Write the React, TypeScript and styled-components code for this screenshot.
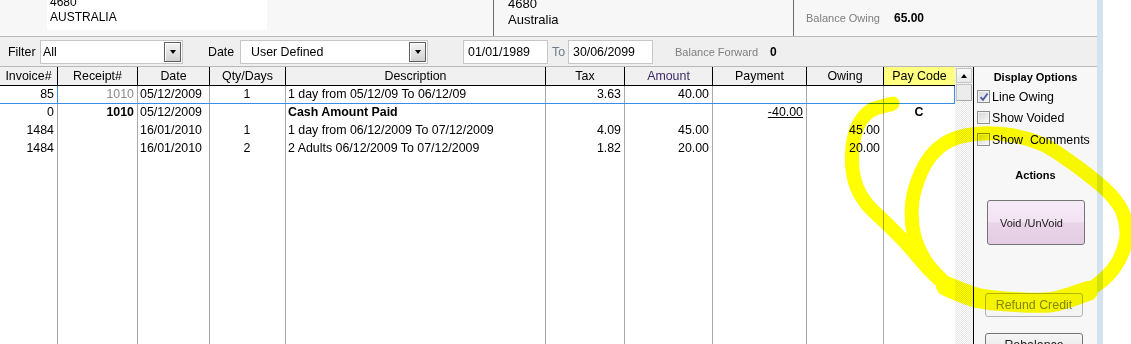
import React from "react";
import styled, { createGlobalStyle } from "styled-components";

const GlobalStyle = createGlobalStyle`
  html, body { margin: 0; padding: 0; background: #fff; }
  body { font-family: "Liberation Sans", Arial, sans-serif; font-size: 12px; color: #000; }
  * { box-sizing: border-box; }
`;

const Screen = styled.div`
  position: relative;
  width: 1131px;
  height: 344px;
  display: flex;
  overflow: hidden;
  background: #fff;
`;

const Main = styled.div`
  width: 1097px;
  display: flex;
  flex-direction: column;
  background: #f7f7f7;
`;

const EdgeStrip = styled.div`
  width: 6px;
  background: #d5e2ef;
`;

/* ---------- top address section ---------- */
const TopSection = styled.div`
  height: 37px;
  display: grid;
  grid-template-columns: 47px 220px 226px 300px 1fr;
  border-bottom: 1px solid #b8b8b8;
`;

const AddressBox = styled.div`
  grid-column: 2;
  height: 30px;
  background: #fff;
  overflow: hidden;
  padding-left: 3px;
`;

const AddressLines = styled.div<{ $size: number; $lh: number; $shift: number }>`
  margin-top: ${(p) => p.$shift}px;
  font-size: ${(p) => p.$size}px;
  line-height: ${(p) => p.$lh}px;
`;

const RightAddress = styled.div`
  grid-column: 4;
  height: 36px;
  border-left: 1px solid #6b6b6b;
  padding-left: 14px;
  overflow: hidden;
`;

const BalanceBlock = styled.div`
  height: 36px;
  border-left: 1px solid #6b6b6b;
  padding-left: 12px;
  display: flex;
  align-items: center;
  gap: 14px;
`;

const MutedLabel = styled.span`
  font-size: 11px;
  color: #7d7d7d;
`;

const BoldValue = styled.span`
  font-weight: bold;
  font-size: 12px;
`;

/* ---------- filter bar ---------- */
const FilterBar = styled.div`
  height: 30px;
  border-bottom: 1px solid #b8b8b8;
  background: #efefef;
  display: flex;
  align-items: center;
  padding-left: 8px;
  font-size: 12.4px;
`;

const BarLabel = styled.span<{ $w: number; $ml?: number; $muted?: boolean }>`
  width: ${(p) => p.$w}px;
  margin-left: ${(p) => p.$ml ?? 0}px;
  color: ${(p) => (p.$muted ? "#6d7b8a" : "#000")};
  flex-shrink: 0;
`;

const SelectBox = styled.div<{ $w: number; $pl: number }>`
  width: ${(p) => p.$w}px;
  height: 24px;
  border: 1px solid #c6c6c6;
  background: #fff;
  display: flex;
  align-items: center;
  padding-left: ${(p) => p.$pl}px;
  flex-shrink: 0;
`;

const DropButton = styled.div`
  margin-left: auto;
  margin-right: 1px;
  width: 17px;
  height: 20px;
  border: 1px solid #5e5e5e;
  background: linear-gradient(#f4f4f4, #d2d2d2);
  box-shadow: inset 1px 1px 0 #ffffff;
  display: flex;
  align-items: center;
  justify-content: center;
`;

const DownTriangle = styled.span`
  width: 0;
  height: 0;
  border-left: 3.5px solid transparent;
  border-right: 3.5px solid transparent;
  border-top: 4px solid #000;
`;

const UpTriangle = styled.span`
  width: 0;
  height: 0;
  border-left: 3.5px solid transparent;
  border-right: 3.5px solid transparent;
  border-bottom: 4px solid #000;
`;

const DateInput = styled.div<{ $ml: number }>`
  width: 85px;
  height: 24px;
  margin-left: ${(p) => p.$ml}px;
  border: 1px solid #c6c6c6;
  background: #fff;
  display: flex;
  align-items: center;
  padding-left: 4px;
  flex-shrink: 0;
`;

/* ---------- content ---------- */
const Content = styled.div`
  flex: 1;
  display: flex;
  min-height: 0;
`;

const COLS = "58px 80px 72px 76px 260px 79px 88px 94px 77px 71px";

const Table = styled.div`
  width: 955px;
  display: flex;
  flex-direction: column;
  background: #fff;
  font-size: 12.4px;
`;

const GridRow = styled.div`
  display: grid;
  grid-template-columns: ${COLS};
`;

const HeaderRow = styled(GridRow)`
  height: 19px;
  background: #f0f0f0;
  border-bottom: 1px solid #000;
`;

const HeaderCell = styled.div<{ $hl?: boolean; $last?: boolean; $color?: string }>`
  text-align: center;
  line-height: 18px;
  border-right: ${(p) => (p.$last ? "none" : "1px solid #000")};
  background: ${(p) => (p.$hl ? "#ffff80" : "transparent")};
  color: ${(p) => p.$color ?? "#000"};
  white-space: nowrap;
  overflow: hidden;
`;

const BodyRow = styled(GridRow)<{ $selected?: boolean }>`
  height: 18px;
  border-bottom: ${(p) => (p.$selected ? "1px solid #3a8ee0" : "none")};
`;

const FillerRow = styled(GridRow)`
  flex: 1;
`;

type Align = "left" | "right" | "center";

const BodyCell = styled.div<{
  $align?: Align;
  $bold?: boolean;
  $muted?: boolean;
  $focus?: boolean;
  $last?: boolean;
  $underline?: boolean;
}>`
  text-align: ${(p) => p.$align ?? "left"};
  font-weight: ${(p) => (p.$bold ? "bold" : "normal")};
  color: ${(p) => (p.$muted ? "#8a8a8a" : "#000")};
  text-decoration: ${(p) => (p.$underline ? "underline" : "none")};
  line-height: 16px;
  padding: 0 3px 0 2px;
  white-space: nowrap;
  overflow: hidden;
  border-right: ${(p) =>
    p.$focus ? "1px solid #3a8ee0" : p.$last ? "none" : "1px solid #a9a9a9"};
`;

const ScrollBar = styled.div`
  width: 18px;
  display: flex;
  flex-direction: column;
  background: repeating-conic-gradient(#e6e6e6 0 25%, #ffffff 0 50%) 0 0 / 2px 2px;
`;

const ScrollButton = styled.div`
  margin: 1px 1px 0 1px;
  height: 15px;
  border: 1px solid #c4c4c4;
  background: linear-gradient(#fafafa, #e8e8e8);
  display: flex;
  align-items: center;
  justify-content: center;
`;

const ScrollThumb = styled.div`
  margin: 1px 1px 0 1px;
  height: 17px;
  border: 1px solid #c4c4c4;
  border-right-color: #a8a8a8;
  border-bottom-color: #a8a8a8;
  background: #ececec;
`;

/* ---------- right panel ---------- */
const SidePanel = styled.div`
  flex: 1;
  border-left: 1px solid #000;
  background: #f7f7f7;
  display: flex;
  flex-direction: column;
  padding-top: 3px;
`;

const PanelHeading = styled.div<{ $mt?: number }>`
  margin-top: ${(p) => p.$mt ?? 0}px;
  font-size: 11px;
  font-weight: bold;
  line-height: 14px;
  text-align: center;
`;

const CheckList = styled.div`
  margin-top: 2px;
  display: flex;
  flex-direction: column;
`;

const CheckRow = styled.div<{ $h: number }>`
  height: ${(p) => p.$h}px;
  display: flex;
  align-items: center;
  padding-left: 3px;
  gap: 2px;
  white-space: pre;
  font-size: 12.4px;
`;

const CheckBox = styled.span`
  width: 13px;
  height: 13px;
  border: 1px solid #8e8f8f;
  background: linear-gradient(135deg, #d6d6d6, #f8f8f8);
  box-shadow: inset 0 0 0 1px #f2f2f2;
  display: flex;
  align-items: center;
  justify-content: center;
`;

const ActionButton = styled.div<{
  $variant: "primary" | "disabled" | "normal";
  $h: number;
  $mt: number;
  $ml: number;
}>`
  width: 98px;
  height: ${(p) => p.$h}px;
  margin-top: ${(p) => p.$mt}px;
  margin-left: ${(p) => p.$ml}px;
  padding-right: ${(p) => (p.$variant === "primary" ? "9px" : "0")};
  border-radius: 3px;
  display: flex;
  align-items: center;
  justify-content: center;
  flex-shrink: 0;
  font-size: ${(p) => (p.$variant === "primary" ? "11px" : "12.4px")};
  border: 1px solid
    ${(p) => (p.$variant === "disabled" ? "#b2b5b8" : "#757575")};
  color: ${(p) => (p.$variant === "disabled" ? "#868686" : "#1a1a1a")};
  background: ${(p) =>
    p.$variant === "primary"
      ? "linear-gradient(#f7eaf7 0%, #f2e3f2 48%, #e9d4e9 52%, #e3cde3 100%)"
      : p.$variant === "disabled"
      ? "#f4f4f4"
      : "linear-gradient(#f6f6f6, #e2e2e2)"};
`;

/* ---------- highlighter overlay ---------- */
const Highlighter = styled.svg`
  position: absolute;
  left: 0;
  top: 0;
  width: 1131px;
  height: 344px;
  pointer-events: none;
  mix-blend-mode: multiply;
`;

type Pt = [number, number];

function smoothPath(pts: Pt[]): string {
  let d = `M${pts[0][0]},${pts[0][1]}`;
  for (let i = 0; i < pts.length - 1; i++) {
    const p0 = pts[i - 1] || pts[i];
    const p1 = pts[i];
    const p2 = pts[i + 1];
    const p3 = pts[i + 2] || p2;
    const c1x = p1[0] + (p2[0] - p0[0]) / 6;
    const c1y = p1[1] + (p2[1] - p0[1]) / 6;
    const c2x = p2[0] - (p3[0] - p1[0]) / 6;
    const c2y = p2[1] - (p3[1] - p1[1]) / 6;
    d += ` C${c1x.toFixed(1)},${c1y.toFixed(1)} ${c2x.toFixed(1)},${c2y.toFixed(1)} ${p2[0]},${p2[1]}`;
  }
  return d;
}

const loopPoints: Pt[] = [
  [892, 104],
  [870, 111],
  [857, 128],
  [852, 155],
  [855, 182],
  [866, 203],
  [885, 222],
  [906, 243],
  [926, 266],
  [948, 286],
  [978, 297],
  [1015, 302],
  [1052, 302],
  [1090, 289],
  [1114, 268],
  [1126, 240],
  [1123, 213],
  [1110, 194],
  [1092, 178],
  [1068, 160],
  [1042, 144],
  [1010, 135],
  [976, 134],
  [949, 141],
  [930, 157],
  [918, 180],
  [912, 205],
  [914, 235],
  [926, 262],
  [944, 282],
];

const bottomBand: Pt[] = [
  [946, 286],
  [978, 298],
  [1015, 302],
  [1052, 302],
  [1088, 291],
];

const columns = [
  "Invoice#",
  "Receipt#",
  "Date",
  "Qty/Days",
  "Description",
  "Tax",
  "Amount",
  "Payment",
  "Owing",
  "Pay Code",
];

type Cell = { text: string; align?: Align; bold?: boolean; muted?: boolean; underline?: boolean };

const rows: Cell[][] = [
  [
    { text: "85", align: "right" },
    { text: "1010", align: "right", muted: true },
    { text: "05/12/2009" },
    { text: "1", align: "center" },
    { text: "1 day from 05/12/09 To 06/12/09" },
    { text: "3.63", align: "right" },
    { text: "40.00", align: "right" },
    { text: "", align: "right" },
    { text: "", align: "right" },
    { text: "", align: "center" },
  ],
  [
    { text: "0", align: "right" },
    { text: "1010", align: "right", bold: true },
    { text: "05/12/2009" },
    { text: "", align: "center" },
    { text: "Cash Amount Paid", bold: true },
    { text: "", align: "right" },
    { text: "", align: "right" },
    { text: "-40.00", align: "right", underline: true },
    { text: "", align: "right" },
    { text: "C", align: "center", bold: true },
  ],
  [
    { text: "1484", align: "right" },
    { text: "", align: "right" },
    { text: "16/01/2010" },
    { text: "1", align: "center" },
    { text: "1 day from 06/12/2009 To 07/12/2009" },
    { text: "4.09", align: "right" },
    { text: "45.00", align: "right" },
    { text: "", align: "right" },
    { text: "45.00", align: "right" },
    { text: "", align: "center" },
  ],
  [
    { text: "1484", align: "right" },
    { text: "", align: "right" },
    { text: "16/01/2010" },
    { text: "2", align: "center" },
    { text: "2 Adults 06/12/2009 To 07/12/2009" },
    { text: "1.82", align: "right" },
    { text: "20.00", align: "right" },
    { text: "", align: "right" },
    { text: "20.00", align: "right" },
    { text: "", align: "center" },
  ],
];

const CheckMark = () => (
  <svg width="10" height="10" viewBox="0 0 10 10">
    <path d="M1.5 5.2 L4 7.8 L8.6 1.5" fill="none" stroke="#4b5aa0" strokeWidth="1.8" />
  </svg>
);

export default function App() {
  return (
    <>
      <GlobalStyle />
      <Screen>
        <Main>
          <TopSection>
            <AddressBox>
              <AddressLines $size={12} $lh={15} $shift={-5}>
                <div>4680</div>
                <div>AUSTRALIA</div>
              </AddressLines>
            </AddressBox>
            <RightAddress>
              <AddressLines $size={13} $lh={15.5} $shift={-4}>
                <div>4680</div>
                <div>Australia</div>
              </AddressLines>
            </RightAddress>
            <BalanceBlock>
              <MutedLabel>Balance Owing</MutedLabel>
              <BoldValue>65.00</BoldValue>
            </BalanceBlock>
          </TopSection>

          <FilterBar>
            <BarLabel $w={32}>Filter</BarLabel>
            <SelectBox $w={143} $pl={2}>
              All
              <DropButton>
                <DownTriangle />
              </DropButton>
            </SelectBox>
            <BarLabel $w={32} $ml={25}>
              Date
            </BarLabel>
            <SelectBox $w={188} $pl={10}>
              User Defined
              <DropButton>
                <DownTriangle />
              </DropButton>
            </SelectBox>
            <DateInput $ml={35}>01/01/1989</DateInput>
            <BarLabel $w={16} $ml={4} $muted>
              To
            </BarLabel>
            <DateInput $ml={0}>30/06/2099</DateInput>
            <BarLabel $w={95} $ml={22}>
              <MutedLabel>Balance Forward</MutedLabel>
            </BarLabel>
            <BoldValue>0</BoldValue>
          </FilterBar>

          <Content>
            <Table>
              <HeaderRow>
                {columns.map((c, i) => (
                  <HeaderCell
                    key={c}
                    $hl={c === "Pay Code"}
                    $last={i === columns.length - 1}
                    $color={c === "Amount" ? "#3b2a63" : undefined}
                  >
                    {c}
                  </HeaderCell>
                ))}
              </HeaderRow>
              {rows.map((r, ri) => (
                <BodyRow key={ri} $selected={ri === 0}>
                  {r.map((cell, ci) => (
                    <BodyCell
                      key={ci}
                      $align={cell.align}
                      $bold={cell.bold}
                      $muted={cell.muted}
                      $underline={cell.underline}
                      $focus={ri === 0 && (ci === 0 || ci === columns.length - 1)}
                      $last={ci === columns.length - 1}
                    >
                      {cell.text}
                    </BodyCell>
                  ))}
                </BodyRow>
              ))}
              <FillerRow>
                {columns.map((c, i) => (
                  <BodyCell key={c} $last={i === columns.length - 1} />
                ))}
              </FillerRow>
            </Table>

            <ScrollBar>
              <ScrollButton>
                <UpTriangle />
              </ScrollButton>
              <ScrollThumb />
            </ScrollBar>

            <SidePanel>
              <PanelHeading>Display Options</PanelHeading>
              <CheckList>
                <CheckRow $h={21}>
                  <CheckBox>
                    <CheckMark />
                  </CheckBox>
                  Line Owing
                </CheckRow>
                <CheckRow $h={21}>
                  <CheckBox />
                  Show Voided
                </CheckRow>
                <CheckRow $h={23}>
                  <CheckBox />
                  {"Show  Comments"}
                </CheckRow>
              </CheckList>
              <PanelHeading $mt={17}>Actions</PanelHeading>
              <ActionButton $variant="primary" $h={45} $mt={18} $ml={13}>
                Void /UnVoid
              </ActionButton>
              <ActionButton $variant="disabled" $h={24} $mt={48} $ml={11}>
                Refund Credit
              </ActionButton>
              <ActionButton $variant="normal" $h={24} $mt={16} $ml={11}>
                Rebalance
              </ActionButton>
            </SidePanel>
          </Content>
        </Main>
        <EdgeStrip />

        <Highlighter viewBox="0 0 1131 344">
          <path
            d={smoothPath(loopPoints)}
            fill="none"
            stroke="#ffff00"
            strokeWidth={14}
            strokeLinecap="round"
            strokeLinejoin="round"
          />
          <path
            d={smoothPath(bottomBand)}
            fill="none"
            stroke="#ffff00"
            strokeWidth={20}
            strokeLinecap="round"
            strokeLinejoin="round"
          />
          <path d="M893 103 L872 109" stroke="#ffff00" strokeWidth={13} strokeLinecap="round" />
        </Highlighter>
      </Screen>
    </>
  );
}
